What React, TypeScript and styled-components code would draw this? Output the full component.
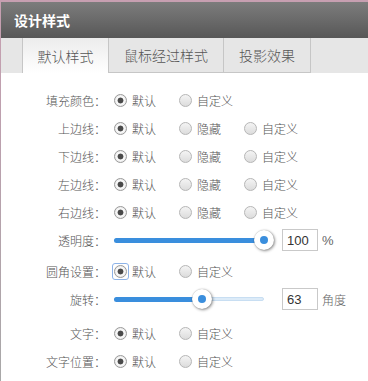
import React from "react";
import styled, { createGlobalStyle, css } from "styled-components";

const GlobalStyle = createGlobalStyle`
  html, body { margin: 0; padding: 0; }
  body {
    font-family: "Noto Sans CJK SC", "Noto Sans", sans-serif;
    background: #fff;
  }
`;

const Frame = styled.div`
  width: 368px;
  height: 381px;
  box-sizing: border-box;
  padding: 2px 0 0 1px;
  background: linear-gradient(180deg, #c79fb1 0%, #b9a1ad 45%, #a8a8a8 100%);
  overflow: hidden;
`;

const Dialog = styled.div`
  display: flex;
  flex-direction: column;
  height: 100%;
`;

const Header = styled.div`
  height: 36px;
  display: flex;
  align-items: center;
  padding-left: 13px;
  background: linear-gradient(180deg, #7c7c7c 0%, #6a6a6a 50%, #575757 100%);
  color: #fff;
  font-size: 14px;
  font-weight: bold;
`;

const TabBar = styled.div`
  height: 35px;
  display: flex;
  padding-left: 21px;
  background: #e6e6e6;
`;

const Tab = styled.div<{ $active?: boolean; $first?: boolean; $width: number }>`
  box-sizing: border-box;
  height: 35px;
  display: flex;
  align-items: center;
  justify-content: center;
  width: ${(p) => p.$width}px;
  font-size: 14px;
  font-weight: 300;
  color: #555;
  border-right: 1px solid #c6c6c6;
  ${(p) =>
    p.$first &&
    css`
      border-left: 1px solid #c6c6c6;
    `}
  ${(p) =>
    p.$active
      ? css`
          background: linear-gradient(180deg, #ececec 0%, #ffffff 100%);
        `
      : css`
          background: #e6e6e6;
          border-bottom: 1px solid #c6c6c6;
        `}
`;

const Content = styled.div`
  flex: 1;
  background: #fff;
  padding-top: 13px;
`;

const Row = styled.div<{ $gap?: number }>`
  display: flex;
  align-items: center;
  height: 28px;
  margin-top: ${(p) => p.$gap || 0}px;
  font-size: 12px;
  font-weight: 300;
  color: #555;
`;

const Label = styled.div`
  width: 105px;
  text-align: right;
  margin-right: 8px;
  white-space: nowrap;
`;

const Option = styled.label`
  display: inline-flex;
  align-items: center;
  margin-right: 23px;
  white-space: nowrap;
`;

const Radio = styled.span<{ $checked?: boolean; $focused?: boolean }>`
  position: relative;
  box-sizing: border-box;
  width: 13px;
  height: 13px;
  border-radius: 50%;
  margin-right: 5px;
  ${(p) =>
    p.$checked
      ? css`
          border: 1px solid #9a9a9a;
          background: radial-gradient(
            circle,
            #4a4a4a 0 2.6px,
            #fdfdfd 3.3px,
            #f4f4f4 4.4px,
            #dadada 100%
          );
        `
      : css`
          border: 1px solid #b6b6b6;
          background: linear-gradient(180deg, #f4f4f4 0%, #dcdcdc 100%);
        `}
  ${(p) =>
    p.$focused &&
    css`
      &::after {
        content: "";
        position: absolute;
        left: -3px;
        top: -3px;
        right: -3px;
        bottom: -3px;
        border: 1px solid #8db3e8;
        border-radius: 3px;
      }
    `}
`;

const Slider = styled.div`
  position: relative;
  width: 150px;
  height: 22px;
`;

const Track = styled.div`
  position: absolute;
  left: 0;
  right: 0;
  top: 9px;
  height: 4px;
  border-radius: 2px;
  box-sizing: border-box;
  background: #dcebf8;
  border: 1px solid #c8def2;
`;

const Fill = styled.div`
  position: absolute;
  left: 0;
  top: 9px;
  height: 5px;
  border-radius: 3px;
  background: #3a8edd;
`;

const Thumb = styled.div`
  position: absolute;
  top: 1px;
  width: 20px;
  height: 20px;
  margin-left: -10px;
  border-radius: 50%;
  background: #fff;
  box-shadow: 1px 1px 3px rgba(0, 0, 0, 0.45), 0 0 1px rgba(0, 0, 0, 0.3);
  display: flex;
  align-items: center;
  justify-content: center;
  &::before {
    content: "";
    width: 8px;
    height: 8px;
    border-radius: 50%;
    background: #3a8edd;
  }
`;

const NumberBox = styled.div`
  box-sizing: border-box;
  width: 36px;
  height: 22px;
  margin-left: 18px;
  padding-left: 4px;
  border: 1px solid #c9c9c9;
  display: flex;
  align-items: center;
  font-family: "Liberation Sans", Arial, sans-serif;
  font-weight: 400;
  font-size: 13px;
  color: #333;
`;

const Unit = styled.span<{ $latin?: boolean }>`
  margin-left: 4px;
  color: #666;
  font-size: ${(p) => (p.$latin ? 13 : 12)}px;
  font-family: ${(p) =>
    p.$latin
      ? `"Liberation Sans", Arial, sans-serif`
      : `"Noto Sans CJK SC", sans-serif`};
`;

type Opt = { text: string; checked?: boolean; focused?: boolean };

const RadioRow = ({ label, options, gap }: { label: string; options: Opt[]; gap?: number }) => (
  <Row $gap={gap}>
    <Label>{label}</Label>
    {options.map((o) => (
      <Option key={o.text}>
        <Radio $checked={o.checked} $focused={o.focused} />
        {o.text}
      </Option>
    ))}
  </Row>
);

const SliderRow = ({
  label,
  ratio,
  value,
  unit,
  latin,
  gap,
}: {
  label: string;
  ratio: number;
  value: string;
  unit: string;
  latin?: boolean;
  gap?: number;
}) => (
  <Row $gap={gap}>
    <Label>{label}</Label>
    <Slider>
      <Track />
      <Fill style={{ width: `${ratio * 100}%` }} />
      <Thumb style={{ left: `${ratio * 100}%` }} />
    </Slider>
    <NumberBox>{value}</NumberBox>
    <Unit $latin={latin}>{unit}</Unit>
  </Row>
);

const two: Opt[] = [{ text: "默认", checked: true }, { text: "自定义" }];
const three: Opt[] = [{ text: "默认", checked: true }, { text: "隐藏" }, { text: "自定义" }];

export default function App() {
  return (
    <>
      <GlobalStyle />
      <Frame>
        <Dialog>
          <Header>设计样式</Header>
          <TabBar>
            <Tab $active $first $width={87}>默认样式</Tab>
            <Tab $width={115}>鼠标经过样式</Tab>
            <Tab $width={87}>投影效果</Tab>
          </TabBar>
          <Content>
            <RadioRow label="填充颜色：" options={two} />
            <RadioRow label="上边线：" options={three} />
            <RadioRow label="下边线：" options={three} />
            <RadioRow label="左边线：" options={three} />
            <RadioRow label="右边线：" options={three} />
            <SliderRow label="透明度：" ratio={1} value="100" unit="%" latin />
            <RadioRow
              gap={3}
              label="圆角设置："
              options={[{ text: "默认", checked: true, focused: true }, { text: "自定义" }]}
            />
            <SliderRow label="旋转：" ratio={88 / 150} value="63" unit="角度" />
            <RadioRow gap={6} label="文字：" options={two} />
            <RadioRow label="文字位置：" options={two} />
          </Content>
        </Dialog>
      </Frame>
    </>
  );
}
